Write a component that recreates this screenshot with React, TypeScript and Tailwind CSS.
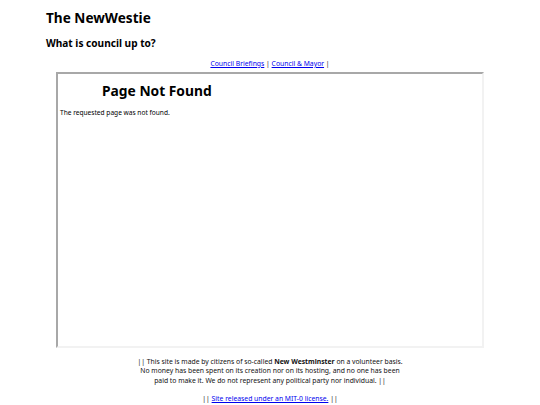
export default function App() {
  return (
    <div className="min-h-[405px] bg-white text-black font-['Noto_Sans',sans-serif]">
      <header className="px-[46px] pt-[9px]">
        <h1 className="text-[13.6px] font-bold leading-[18px]">The NewWestie</h1>
        <h2 className="mt-[10px] text-[10.1px] font-bold leading-[13px]">What is council up to?</h2>
      </header>

      <nav className="mt-[9px] text-center text-[6.8px] leading-[9px] text-[#222]">
        <a href="#" className="text-[#0000ee] underline">Council Briefings</a> |{' '}
        <a href="#" className="text-[#0000ee] underline">Council &amp; Mayor</a> |
      </nav>

      <div className="mx-auto mt-[4px] h-[276px] w-[428px] border-2 border-t-[#a8a8a8] border-l-[#a8a8a8] border-r-[#f2f2f2] border-b-[#f2f2f2]">
        <div className="pt-[8px]">
          <h1 className="pl-[44px] text-[13.8px] font-bold leading-[18px]">Page Not Found</h1>
          <p className="mt-[8px] pl-[2px] text-[6.6px] leading-[9px]">The requested page was not found.</p>
        </div>
      </div>

      <footer className="mt-[9px] text-center text-[6.8px] leading-[9.3px] text-[#111]">
        <p className="mx-auto w-[272px]">
          || This site is made by citizens of so-called <b>New Westminster</b> on a volunteer basis.
          No money has been spent on its creation nor on its hosting, and no one has been
          paid to make it. We do not represent any political party nor individual. ||
        </p>
        <p className="mt-[9px]">
          || <a href="#" className="text-[#0000ee] underline">Site released under an MIT-0 license.</a> ||
        </p>
      </footer>
    </div>
  );
}
